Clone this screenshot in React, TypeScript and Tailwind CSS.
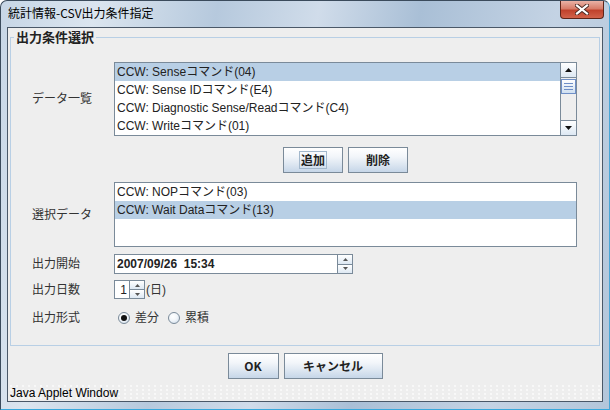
const FONT = "font-['Liberation_Sans','Noto_Sans_CJK_JP',sans-serif]";
const CJK = "font-['Noto_Sans_CJK_JP','Liberation_Sans',sans-serif]";

const Tri = ({ up, w = 7, h = 4, color = "#111" }: { up?: boolean; w?: number; h?: number; color?: string }) => (
  <svg width={w} height={h} viewBox={`0 0 ${w} ${h}`}>
    <polygon points={up ? `0,${h} ${w},${h} ${w / 2},0` : `0,0 ${w},0 ${w / 2},${h}`} fill={color} />
  </svg>
);

const Btn = ({ children, className = "", focus = false }: { children: React.ReactNode; className?: string; focus?: boolean }) => (
  <button
    className={`flex h-[26px] items-center justify-center border border-[#7a8a99] bg-[linear-gradient(to_bottom,#ffffff_0%,#f3f6fa_35%,#dfe8f2_65%,#c6d6e8_100%)] text-[12px] font-bold text-[#222] ${CJK} ${className}`}
  >
    <span className={`px-[1px] leading-[16px] ${focus ? "border border-[#a3b8cc]" : "border border-transparent"}`}>{children}</span>
  </button>
);

const Row = ({ text, selected = false }: { text: string; selected?: boolean }) => (
  <div className={`h-[18px] whitespace-nowrap px-[2px] text-[12px] leading-[18px] text-[#222] ${selected ? "bg-[#b8cfe5]" : ""}`}>{text}</div>
);

const Radio = ({ checked = false }: { checked?: boolean }) => (
  <span className="flex h-[12px] w-[12px] items-center justify-center rounded-full border border-[#7a8a99] bg-[radial-gradient(circle_at_40%_35%,#ffffff_0%,#f2f6fa_45%,#c9d8e8_100%)]">
    {checked && <span className="h-[6px] w-[6px] rounded-full bg-[#111]" />}
  </span>
);

const SpinBtns = ({ h }: { h: number }) => (
  <div className="flex w-[15px] flex-col border border-l-0 border-[#7a8a99]" style={{ height: h }}>
    <div className="flex flex-1 items-center justify-center border-b border-[#7a8a99] bg-[linear-gradient(to_bottom,#ffffff,#dde8f3)]">
      <Tri up w={5} h={3} color="#555" />
    </div>
    <div className="flex flex-1 items-center justify-center bg-[linear-gradient(to_bottom,#ffffff,#dde8f3)]">
      <Tri w={5} h={3} color="#555" />
    </div>
  </div>
);

export default function App() {
  return (
    <div className={`flex h-[410px] w-[610px] flex-col overflow-hidden rounded-t-[7px] border border-[#3b4b5c] border-b-[#39a8dc] border-r-[#4aa6d6] bg-[linear-gradient(100deg,#c7d6e6_0%,#dbe5ef_14%,#b6c9dd_32%,#d0dcea_47%,#a9bfd6_62%,#c4d3e4_82%,#b3c6da_100%)] ${FONT}`}>
      {/* title bar */}
      <div className="flex h-[26px] shrink-0 items-start">
        <span className={`ml-[7px] mt-[4px] text-[12px] leading-[16px] text-black ${CJK}`}>統計情報-CSV出力条件指定</span>
        <div className="ml-auto mr-[5px] flex h-[18px] w-[44px] items-center justify-center rounded-b-[4px] border border-t-0 border-[#5e2418] bg-[linear-gradient(to_bottom,#e9b2a6_0%,#d77c69_45%,#c0422c_55%,#d2624a_100%)]">
          <svg width="14" height="11" viewBox="0 0 14 11">
            <path d="M2 1.5 L12 9.5 M12 1.5 L2 9.5" stroke="#4a2a24" strokeWidth="4" strokeLinecap="square" />
            <path d="M2 1.5 L12 9.5 M12 1.5 L2 9.5" stroke="#ffffff" strokeWidth="2.2" strokeLinecap="square" />
          </svg>
        </div>
      </div>

      {/* client area */}
      <div className="mx-[6px] mb-[7px] flex flex-1 flex-col border border-[#4a5868] bg-[#eeeeee]">
        <fieldset className="mx-[2px] mt-[1px] border border-[#b8cfe5] px-0 pb-[17px] pt-[17px]">
          <legend className={`ml-[3px] px-[2px] text-[13px] font-bold leading-[16px] text-[#222] ${CJK}`}>出力条件選択</legend>

          <div className="pl-[21px] pr-[22px]">
            {/* データ一覧 */}
            <div className="flex items-center">
              <span className="w-[82px] text-[12px] text-[#333]">データ一覧</span>
              <div className="flex h-[74px] flex-1 overflow-hidden border border-[#7a8a99] bg-white">
                <div className="flex-1 overflow-hidden">
                  <Row text="CCW: Senseコマンド(04)" selected />
                  <Row text="CCW: Sense IDコマンド(E4)" />
                  <Row text="CCW: Diagnostic Sense/Readコマンド(C4)" />
                  <Row text="CCW: Writeコマンド(01)" />
                </div>
                <div className="flex w-[16px] flex-col border-l border-[#7a8a99] bg-[#eeeeee]">
                  <div className="flex h-[15px] items-center justify-center border-b border-[#7a8a99] bg-[linear-gradient(to_bottom,#ffffff,#dde8f3)]">
                    <Tri up />
                  </div>
                  <div className="mt-[1px] flex h-[15px] flex-col items-center justify-center gap-[2px] border border-[#6f8fc7] bg-[linear-gradient(to_bottom,#ffffff,#cfdff0)]">
                    <span className="h-[1px] w-[9px] bg-[#6f8fc7]" />
                    <span className="h-[1px] w-[9px] bg-[#6f8fc7]" />
                    <span className="h-[1px] w-[9px] bg-[#6f8fc7]" />
                  </div>
                  <div className="flex-1" />
                  <div className="flex h-[15px] items-center justify-center border-t border-[#7a8a99] bg-[linear-gradient(to_bottom,#ffffff,#dde8f3)]">
                    <Tri />
                  </div>
                </div>
              </div>
            </div>

            {/* 追加 / 削除 */}
            <div className="mt-[11px] flex">
              <div className="w-[82px]" />
              <div className="flex flex-1 justify-center gap-[5px]">
                <Btn className="w-[60px]" focus>追加</Btn>
                <Btn className="w-[60px]">削除</Btn>
              </div>
            </div>

            {/* 選択データ */}
            <div className="mt-[9px] flex items-center">
              <span className="w-[82px] text-[12px] text-[#333]">選択データ</span>
              <div className="h-[65px] flex-1 overflow-hidden border border-[#7a8a99] bg-white">
                <Row text="CCW: NOPコマンド(03)" />
                <Row text="CCW: Wait Dataコマンド(13)" selected />
              </div>
            </div>

            {/* 出力開始 */}
            <div className="mt-[7px] flex items-center">
              <span className="w-[82px] text-[12px] text-[#333]">出力開始</span>
              <div className="flex h-[20px] w-[224px] items-center border border-[#7a8a99] bg-white px-[2px] text-[12px] font-bold whitespace-pre text-[#222]">
                2007/09/26  15:34
              </div>
              <SpinBtns h={20} />
            </div>

            {/* 出力日数 */}
            <div className="mt-[6px] flex items-center">
              <span className="w-[82px] text-[12px] text-[#333]">出力日数</span>
              <div className="flex h-[19px] w-[16px] items-center justify-end border border-[#7a8a99] bg-white pr-[2px] text-[12px] text-[#222]">
                1
              </div>
              <SpinBtns h={19} />
              <span className="ml-[1px] text-[12px] text-[#333]">(日)</span>
            </div>

            {/* 出力形式 */}
            <div className="mt-[9px] flex h-[20px] items-center">
              <span className="w-[86px] text-[12px] text-[#333]">出力形式</span>
              <Radio checked />
              <span className="ml-[5px] text-[12px] text-[#333]">差分</span>
              <span className="ml-[9px]">
                <Radio />
              </span>
              <span className="ml-[5px] text-[12px] text-[#333]">累積</span>
            </div>
          </div>
        </fieldset>

        {/* OK / キャンセル */}
        <div className="mt-[7px] flex justify-center gap-[5px]">
          <Btn className="w-[51px]">OK</Btn>
          <Btn className="w-[99px]">キャンセル</Btn>
        </div>

        {/* status */}
        <div className="mt-auto flex h-[17px] items-center bg-[radial-gradient(circle,rgba(255,255,255,0.95)_0.6px,transparent_0.9px)] bg-[length:6px_4px] pl-[2px] text-[12px] text-black">
          Java Applet Window
        </div>
      </div>
    </div>
  );
}
